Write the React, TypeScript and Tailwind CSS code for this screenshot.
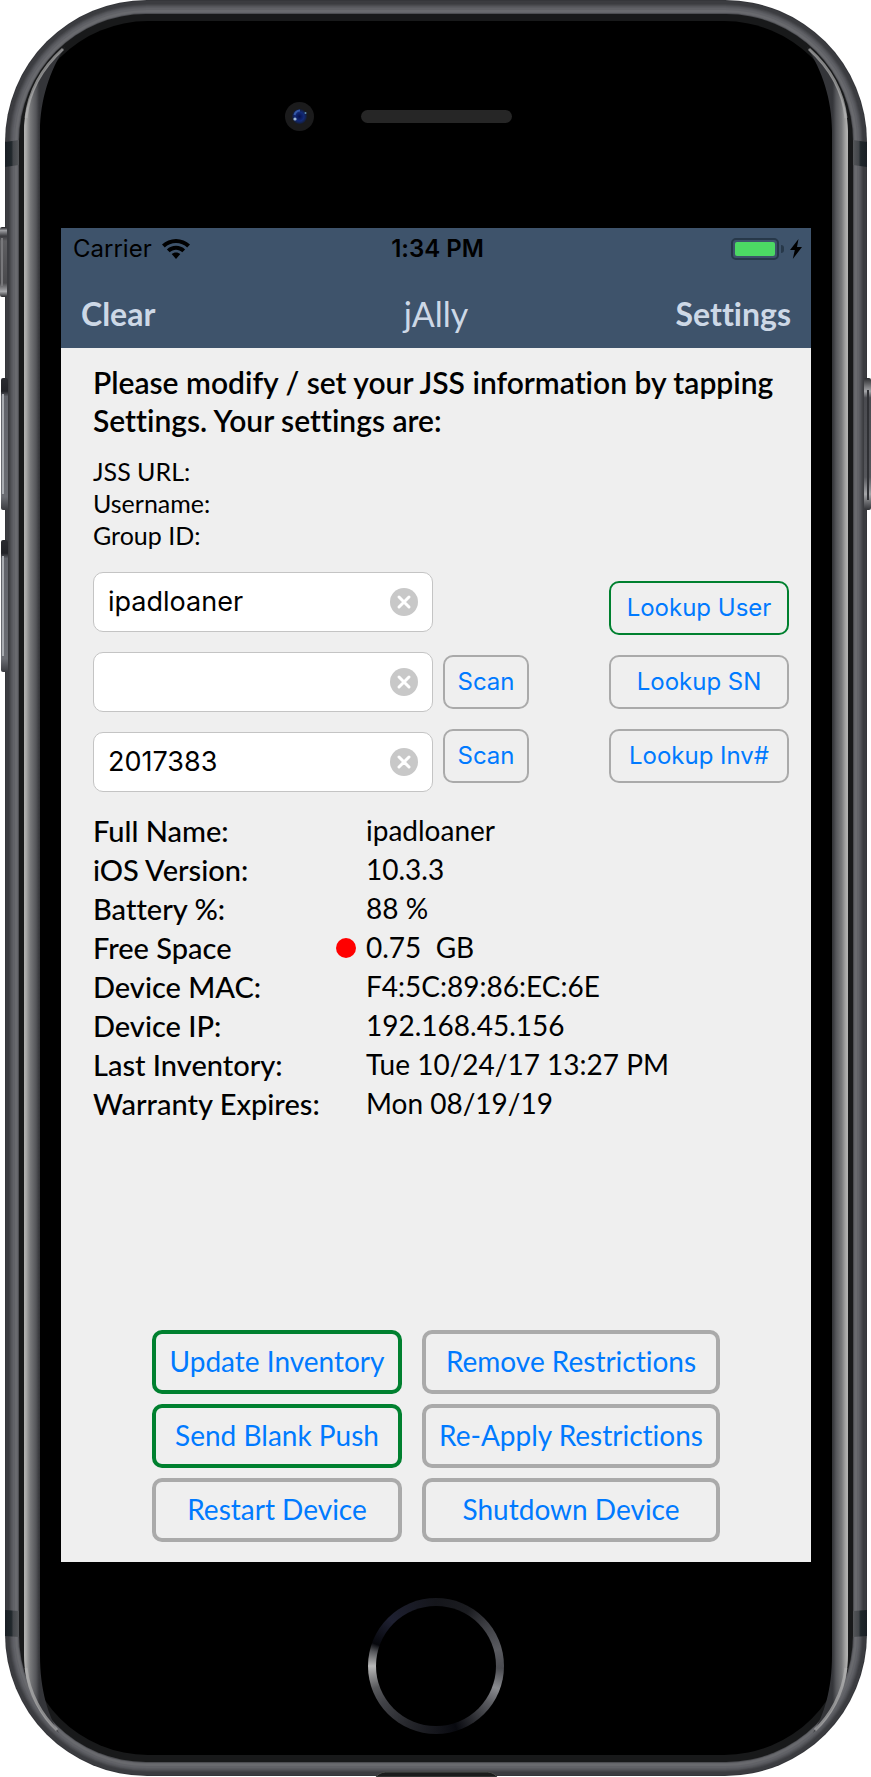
import { useState } from "react";

const frameLayers = [
  { inset: 0, color: "#35363a" },
  { inset: 1, color: "#3b3c40" },
  { inset: 4, color: "#424347" },
  { inset: 5, color: "#4b4c50" },
  { inset: 6, color: "#54555a" },
  { inset: 7, color: "#5a5b60" },
  { inset: 8, color: "#616267" },
  { inset: 10, color: "#696a6e" },
  { inset: 12, color: "#64656a" },
  { inset: 13, color: "#4d4e52" },
];

function Glass() {
  return (
    <g>
      <path
        d="M24 131 C24 100 40 70 65 47 C50 70 40 100 40 131 V1655 C40 1690 48 1715 59 1733 C36 1710 24 1685 24 1655 Z"
        fill="url(#glass)"
      />
      <path d="M26 118 C29 90 43 67 63 49" fill="none" stroke="#b0b0b0" strokeWidth="3" opacity=".7" />
      <path d="M26 1668 C29 1694 42 1716 57 1730" fill="none" stroke="#b0b0b0" strokeWidth="3" opacity=".7" />
    </g>
  );
}

function Bands() {
  return (
    <g fill="url(#band)">
      <path d="M5 142 L19 140 V165 L5 167 Z" />
      <path d="M5 1610 L19 1611 V1637 L5 1636 Z" />
    </g>
  );
}

function DeviceBody() {
  return (
    <svg
      className="absolute inset-0 h-full w-full"
      viewBox="0 0 871 1777"
      preserveAspectRatio="none"
      aria-hidden="true"
    >
      <defs>
        <linearGradient id="glass" gradientUnits="userSpaceOnUse" x1="24" y1="0" x2="40" y2="0">
          <stop offset="0" stopColor="#b4b4b3" />
          <stop offset=".12" stopColor="#aaaaa9" />
          <stop offset=".4" stopColor="#77787a" />
          <stop offset=".75" stopColor="#55565a" />
          <stop offset=".94" stopColor="#37383c" />
          <stop offset="1" stopColor="#343539" />
        </linearGradient>
        <linearGradient id="band" gradientUnits="userSpaceOnUse" x1="5" y1="0" x2="19" y2="0">
          <stop offset="0" stopColor="#1a1f25" />
          <stop offset=".45" stopColor="#20272b" />
          <stop offset=".6" stopColor="#43464a" />
          <stop offset="1" stopColor="#55575a" />
        </linearGradient>
        <linearGradient id="mute" x1="0" y1="0" x2="0" y2="1">
          <stop offset="0" stopColor="#1c1c1f" />
          <stop offset=".05" stopColor="#9b9ca0" />
          <stop offset=".13" stopColor="#3a3a3e" />
          <stop offset=".2" stopColor="#5e5e61" />
          <stop offset=".8" stopColor="#4a4a4d" />
          <stop offset=".92" stopColor="#a9aaad" />
          <stop offset="1" stopColor="#2a2a2d" />
        </linearGradient>
        <linearGradient id="volume" x1="0" y1="0" x2="0" y2="1">
          <stop offset="0" stopColor="#2a2b30" />
          <stop offset=".1" stopColor="#222328" />
          <stop offset=".14" stopColor="#606269" />
          <stop offset=".9" stopColor="#6b6d73" />
          <stop offset="1" stopColor="#3a3b40" />
        </linearGradient>
        <linearGradient id="power" x1="0" y1="0" x2="0" y2="1">
          <stop offset="0" stopColor="#2a2b2e" />
          <stop offset=".1" stopColor="#a5a6a9" />
          <stop offset=".15" stopColor="#4a4b50" />
          <stop offset=".75" stopColor="#55565b" />
          <stop offset=".88" stopColor="#a5a6a9" />
          <stop offset="1" stopColor="#303135" />
        </linearGradient>
      </defs>

      {frameLayers.map((l) => (
        <rect
          key={l.inset}
          x={5 + l.inset}
          y={l.inset}
          width={862 - l.inset * 2}
          height={1776 - l.inset * 2}
          rx={142 - l.inset}
          ry={142 - l.inset}
          fill={l.color}
        />
      ))}
      <rect x="19" y="14" width="834" height="1748" rx="127" fill="#18191a" />
      <rect x="24" y="21" width="824" height="1734" rx="124" fill="#000" />

      <Glass />
      <Bands />
      <g transform="translate(872 0) scale(-1 1)">
        <Glass />
        <Bands />
      </g>

      <rect x="0" y="227" width="7" height="70" rx="2" fill="url(#mute)" />
      <rect x="1" y="238" width="2" height="48" fill="#78787b" />
      <rect x="1" y="378" width="7" height="132" rx="2" fill="url(#volume)" />
      <rect x="2" y="394" width="2" height="100" fill="#a9acb1" />
      <rect x="1" y="540" width="7" height="132" rx="2" fill="url(#volume)" />
      <rect x="2" y="556" width="2" height="100" fill="#a9acb1" />
      <rect x="864" y="378" width="7" height="132" rx="2" fill="url(#power)" />
      <rect x="867" y="390" width="2" height="110" fill="#2f3034" />

      <path d="M376 1777 C379 1773 383 1772 387 1772 H486 C490 1772 494 1773 497 1777 Z" fill="#1b1c1c" stroke="#4d504c" />
    </svg>
  );
}

function Camera() {
  return (
    <svg className="h-[29px] w-[29px]" viewBox="0 0 29 29" aria-hidden="true">
      <defs>
        <radialGradient id="lens">
          <stop offset="0" stopColor="#06104a" />
          <stop offset=".6" stopColor="#122a78" />
          <stop offset="1" stopColor="#141c33" />
        </radialGradient>
      </defs>
      <circle cx="14.500" cy="14.500" r="14.500" fill="#1b1b1c" />
      <circle cx="14.500" cy="14.500" r="7.500" fill="url(#lens)" />
      <path d="M9.500 13a6 6 0 0 1 5.500-4.500" stroke="#3558a6" strokeWidth="2" fill="none" />
      <circle cx="10" cy="17" r="1.600" fill="#9db7d6" />
      <circle cx="20.500" cy="11" r="1" fill="#5f8fb4" />
    </svg>
  );
}

function WifiIcon() {
  return (
    <svg className="h-[20px] w-[28px]" viewBox="0 0 28 20" aria-hidden="true">
      <path
        d="M14 0C8.600 0 3.700 2.100 0 5.500L2.800 8.400C5.700 5.700 9.700 4 14 4s8.300 1.700 11.200 4.400L28 5.500C24.300 2.100 19.400 0 14 0Z"
      />
      <path
        d="M14 6.800c-3.500 0-6.700 1.400-9.100 3.600l2.800 2.900C9.400 11.700 11.600 10.800 14 10.800s4.600.9 6.300 2.500l2.800-2.900C20.700 8.200 17.500 6.800 14 6.800Z"
      />
      <path d="M14 13.400c-1.700 0-3.200.6-4.300 1.700L14 20l4.300-4.900c-1.100-1.100-2.600-1.700-4.300-1.700Z" />
    </svg>
  );
}

function StatusBar() {
  return (
    <div className="grid h-[42px] grid-cols-3 items-center pr-[9px] pl-[12px] font-['Inter',sans-serif] text-[24px] leading-[30px] text-black">
      <div className="flex items-center gap-[10px]">
        <span>Carrier</span>
        <WifiIcon />
      </div>
      <div className="text-center font-semibold whitespace-nowrap">1:34 PM</div>
      <div className="flex items-center justify-end">
        <span className="h-[22px] w-[48px] rounded-[5px] border-2 border-[#273849] p-[2px]">
          <span className="block h-full rounded-[2px] bg-[#4cd964]" />
        </span>
        <span className="ml-[2px] h-[8px] w-[3px] rounded-r-full bg-[#273849]" />
        <svg className="ml-[6px] h-[20px] w-[12px]" viewBox="0 0 12 20" aria-hidden="true">
          <path d="M8.500 0 L0 11 H4.800 L2.800 20 L12 8 H7 Z" />
        </svg>
      </div>
    </div>
  );
}

function SearchField({ label, value, onChange }: { label: string; value: string; onChange: (v: string) => void }) {
  return (
    <div className="flex h-[60px] items-center rounded-[10px] border border-[#c4c4c4] bg-white px-[14px]">
      <input
        type="text"
        aria-label={label}
        value={value}
        onChange={(e) => onChange(e.target.value)}
        className="h-[54px] min-w-0 flex-1 bg-transparent pb-[2px] font-['Inter',sans-serif] text-[27px] text-black outline-none"
      />
      <button type="button" aria-label={`Clear ${label}`} onClick={() => onChange("")}>
        <svg className="block h-[28px] w-[28px]" viewBox="0 0 28 28" aria-hidden="true">
          <circle cx="14" cy="14" r="14" fill="#c8c8c8" />
          <path d="M9 9l10 10M19 9L9 19" stroke="#fff" strokeWidth="3" strokeLinecap="round" />
        </svg>
      </button>
    </div>
  );
}

function SmallButton({ text, active = false }: { text: string; active?: boolean }) {
  return (
    <button
      type="button"
      className={`h-[54px] w-full rounded-[10px] border-2 font-['Inter',sans-serif] text-[24px] whitespace-nowrap text-[#007aff] ${
        active ? "border-[#00802f]" : "border-[#aaaaaa]"
      }`}
    >
      {text}
    </button>
  );
}

function ActionButton({ text, active = false }: { text: string; active?: boolean }) {
  return (
    <button
      type="button"
      className={`h-[64px] rounded-[10px] border-4 pb-[2px] text-[28px] whitespace-nowrap text-[#007aff] ${
        active ? "border-[#00802f]" : "border-[#aaaaaa]"
      }`}
    >
      {text}
    </button>
  );
}

const details = [
  { label: "Full Name:", value: "ipadloaner" },
  { label: "iOS Version:", value: "10.3.3" },
  { label: "Battery %:", value: "88 %" },
  { label: "Free Space", value: "0.75  GB", warning: true },
  { label: "Device MAC:", value: "F4:5C:89:86:EC:6E" },
  { label: "Device IP:", value: "192.168.45.156" },
  { label: "Last Inventory:", value: "Tue 10/24/17 13:27 PM" },
  { label: "Warranty Expires:", value: "Mon 08/19/19" },
];

export default function App() {
  const [user, setUser] = useState("ipadloaner");
  const [serial, setSerial] = useState("");
  const [inventory, setInventory] = useState("2017383");

  return (
    <div className="relative flex min-h-screen w-full flex-col bg-white font-['Lato','Open_Sans',sans-serif] [font-variant-ligatures:none]">
      <DeviceBody />

      <div className="relative grid h-[228px] grid-cols-[1fr_151px_1fr] items-start pt-[102px] pl-[2px]">
        <div className="flex justify-end pr-[47px]">
          <Camera />
        </div>
        <div className="mt-[8px] h-[13px] rounded-full bg-[#262626]" />
      </div>

      <div className="relative mr-[60px] ml-[61px] flex flex-1 flex-col bg-[#efefef]">
        <header className="bg-[#3e536b]">
          <StatusBar />
          <nav className="grid h-[78px] grid-cols-3 items-center px-[20px] pt-[10px] text-[#cdd8e6]">
            <button type="button" className="justify-self-start text-[32px] font-bold">
              Clear
            </button>
            <h1 className="text-center text-[34px] leading-[40px]">jAlly</h1>
            <button type="button" className="justify-self-end text-[32px] font-bold">
              Settings
            </button>
          </nav>
        </header>

        <main className="flex flex-1 flex-col pt-[15px] pr-[22px] pb-[20px] pl-[32px] text-black">
          <p className="text-[30px] leading-[38px] font-semibold">
            Please modify / set your JSS information by tapping Settings. Your settings are:
          </p>
          <div className="mt-[16px] text-[25px] leading-[32px]">
            <p>JSS URL:</p>
            <p>Username:</p>
            <p>Group ID:</p>
          </div>

          <div className="mt-[21px] flex items-start">
            <div className="flex w-[340px] flex-col gap-[20px]">
              <SearchField label="user" value={user} onChange={setUser} />
              <SearchField label="serial number" value={serial} onChange={setSerial} />
              <SearchField label="inventory number" value={inventory} onChange={setInventory} />
            </div>
            <div className="ml-[10px] flex w-[86px] flex-col gap-[20px] self-end pb-[9px]">
              <SmallButton text="Scan" />
              <SmallButton text="Scan" />
            </div>
            <div className="ml-auto flex w-[180px] flex-col gap-[20px] self-end pb-[9px]">
              <SmallButton text="Lookup User" active />
              <SmallButton text="Lookup SN" />
              <SmallButton text="Lookup Inv#" />
            </div>
          </div>

          <dl className="mt-[19px] text-[28px] leading-[39px]">
            {details.map((d) => (
              <div key={d.label} className="flex">
                <dt className="w-[243px] text-[29px] font-medium whitespace-nowrap">{d.label}</dt>
                <dd className="flex items-center whitespace-pre">
                  <span className="flex w-[30px]">
                    {d.warning && <span className="h-[20px] w-[20px] rounded-full bg-[#ff0000]" />}
                  </span>
                  {d.value}
                </dd>
              </div>
            ))}
          </dl>

          <div className="mt-auto grid grid-cols-[250px_298px] justify-center gap-x-[20px] gap-y-[10px] pr-[10px]">
            <ActionButton text="Update Inventory" active />
            <ActionButton text="Remove Restrictions" />
            <ActionButton text="Send Blank Push" active />
            <ActionButton text="Re-Apply Restrictions" />
            <ActionButton text="Restart Device" />
            <ActionButton text="Shutdown Device" />
          </div>
        </main>
      </div>

      <footer className="relative flex h-[215px] justify-center pt-[36px]">
        <button
          type="button"
          aria-label="Home"
          className="h-[136px] w-[136px] rounded-full bg-[conic-gradient(#15161b_0deg,#1b1c20_30deg,#3c3d42_50deg,#5a5b60_75deg,#4a4b50_92deg,#8a8b8f_110deg,#5a5b60_125deg,#2b2c31_145deg,#08090f_162deg,#15161c_180deg,#25262b_205deg,#414247_235deg,#58595c_250deg,#b8b8b8_270deg,#55565a_283deg,#06070c_290deg,#1e2031_315deg,#15161b_360deg)] p-[8px]"
        >
          <span className="block h-full w-full rounded-full bg-black" />
        </button>
      </footer>
    </div>
  );
}
